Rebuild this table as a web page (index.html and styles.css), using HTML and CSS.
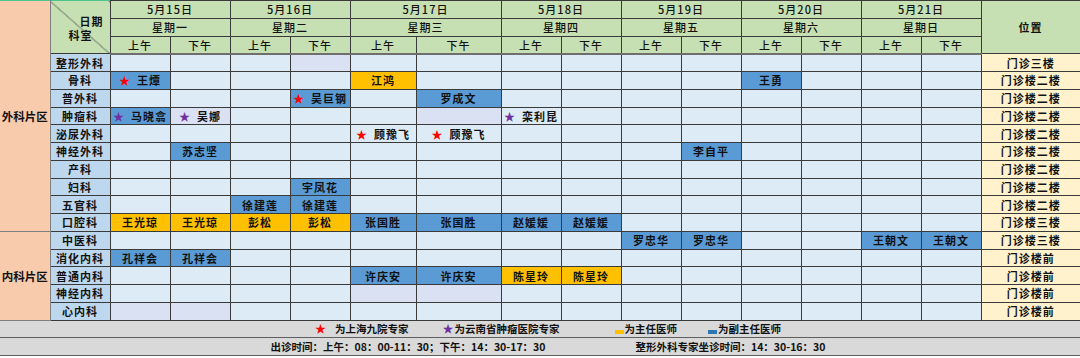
FILE: index.html
```html
<!DOCTYPE html>
<html>
    <head>
        <meta charset="utf-8">
        <title>门诊排班表</title>
        <link rel="stylesheet" href="styles.css">
    </head>
    <body>
        <table id="schedule">
            <colgroup>
                <col class="c-area"><col class="c-dept">
                <col class="c-slot"><col class="c-slot"><col class="c-slot"><col class="c-slot">
                <col class="c-wide1"><col class="c-wide2">
                <col class="c-slot"><col class="c-slot"><col class="c-slot"><col class="c-slot">
                <col class="c-slot"><col class="c-slot"><col class="c-slot"><col class="c-slot">
                <col class="c-pos">
            </colgroup>
            <tr>
                <td rowspan="13" class="area">外科片区</td>
                <td rowspan="3" class="corner"><span class="c-date">日期</span><span class="c-dept-lbl">科室</span></td>
                <td colspan="2" class="head">5月15日</td>
                <td colspan="2" class="head">5月16日</td>
                <td colspan="2" class="head">5月17日</td>
                <td colspan="2" class="head">5月18日</td>
                <td colspan="2" class="head gl">5月19日</td>
                <td colspan="2" class="head gl">5月20日</td>
                <td colspan="2" class="head gl">5月21日</td>
                <td rowspan="3" class="head pos-head">位置</td>
            </tr>
            <tr>
                <td colspan="2" class="head">星期一</td>
                <td colspan="2" class="head">星期二</td>
                <td colspan="2" class="head">星期三</td>
                <td colspan="2" class="head">星期四</td>
                <td colspan="2" class="head gl">星期五</td>
                <td colspan="2" class="head gl">星期六</td>
                <td colspan="2" class="head gl">星期日</td>
            </tr>
            <tr class="half">
                <td class="head">上午</td><td class="head">下午</td>
                <td class="head">上午</td><td class="head">下午</td>
                <td class="head">上午</td><td class="head">下午</td>
                <td class="head">上午</td><td class="head">下午</td>
                <td class="head gl">上午</td><td class="head gl">下午</td>
                <td class="head gl">上午</td><td class="head gl">下午</td>
                <td class="head gl">上午</td><td class="head">下午</td>
            </tr>
            <tr>
                <td class="dept">整形外科</td>
                <td></td><td></td><td></td><td class="l"></td><td></td><td></td><td></td><td></td>
                <td class="gl"></td><td class="gl"></td><td class="gl"></td><td class="gl"></td><td class="gl"></td><td></td>
                <td class="pos">门诊三楼</td>
            </tr>
            <tr>
                <td class="dept">骨科</td>
                <td class="b"><span class="star red">★</span>王燂</td><td></td><td></td><td></td>
                <td class="y">江鸿</td><td></td><td></td><td></td>
                <td class="gl"></td><td class="gl"></td><td class="gl b">王勇</td><td class="gl"></td><td class="gl"></td><td></td>
                <td class="pos">门诊楼二楼</td>
            </tr>
            <tr>
                <td class="dept">普外科</td>
                <td></td><td></td><td></td><td class="b"><span class="star red">★</span>吴巨钢</td>
                <td></td><td class="b">罗成文</td><td></td><td></td>
                <td class="gl"></td><td class="gl"></td><td class="gl"></td><td class="gl"></td><td class="gl"></td><td></td>
                <td class="pos">门诊楼二楼</td>
            </tr>
            <tr>
                <td class="dept">肿瘤科</td>
                <td class="b"><span class="star purple">★</span>马晓翕</td><td class="l"><span class="star purple">★</span>吴娜</td><td></td><td></td>
                <td></td><td class="l"></td><td><span class="star purple">★</span>栾利昆</td><td></td>
                <td class="gl"></td><td class="gl"></td><td class="gl"></td><td class="gl"></td><td class="gl"></td><td></td>
                <td class="pos">门诊楼二楼</td>
            </tr>
            <tr>
                <td class="dept">泌尿外科</td>
                <td></td><td></td><td></td><td></td>
                <td><span class="star red">★</span>顾豫飞</td><td><span class="star red">★</span>顾豫飞</td><td></td><td></td>
                <td class="gl"></td><td class="gl"></td><td class="gl"></td><td class="gl"></td><td class="gl"></td><td></td>
                <td class="pos">门诊楼二楼</td>
            </tr>
            <tr>
                <td class="dept">神经外科</td>
                <td></td><td class="b">苏志坚</td><td></td><td></td>
                <td></td><td></td><td></td><td></td>
                <td class="gl"></td><td class="gl b">李自平</td><td class="gl"></td><td class="gl"></td><td class="gl"></td><td></td>
                <td class="pos">门诊楼二楼</td>
            </tr>
            <tr>
                <td class="dept">产科</td>
                <td></td><td></td><td></td><td></td><td></td><td></td><td></td><td></td>
                <td class="gl"></td><td class="gl"></td><td class="gl"></td><td class="gl"></td><td class="gl"></td><td></td>
                <td class="pos">门诊楼二楼</td>
            </tr>
            <tr>
                <td class="dept">妇科</td>
                <td></td><td></td><td></td><td class="b">宇凤花</td>
                <td></td><td></td><td></td><td></td>
                <td class="gl"></td><td class="gl"></td><td class="gl"></td><td class="gl"></td><td class="gl"></td><td></td>
                <td class="pos">门诊楼二楼</td>
            </tr>
            <tr>
                <td class="dept">五官科</td>
                <td></td><td></td><td class="b">徐建莲</td><td class="b">徐建莲</td>
                <td></td><td></td><td></td><td></td>
                <td class="gl"></td><td class="gl"></td><td class="gl"></td><td class="gl"></td><td class="gl"></td><td></td>
                <td class="pos">门诊楼二楼</td>
            </tr>
            <tr>
                <td class="dept">口腔科</td>
                <td class="y">王光琼</td><td class="y">王光琼</td><td class="y">彭松</td><td class="y">彭松</td>
                <td class="b">张国胜</td><td class="b">张国胜</td><td class="b">赵媛媛</td><td class="b">赵媛媛</td>
                <td class="gl"></td><td class="gl"></td><td class="gl"></td><td class="gl"></td><td class="gl"></td><td></td>
                <td class="pos">门诊楼三楼</td>
            </tr>
            <tr>
                <td rowspan="5" class="area">内科片区</td>
                <td class="dept">中医科</td>
                <td></td><td></td><td></td><td></td><td></td><td></td><td></td><td></td>
                <td class="gl b">罗忠华</td><td class="gl b">罗忠华</td><td class="gl"></td><td class="gl"></td><td class="gl b">王朝文</td><td class="b">王朝文</td>
                <td class="pos">门诊楼三楼</td>
            </tr>
            <tr>
                <td class="dept">消化内科</td>
                <td class="b">孔祥会</td><td class="b">孔祥会</td><td></td><td></td><td></td><td></td><td></td><td></td>
                <td class="gl"></td><td class="gl"></td><td class="gl"></td><td class="gl"></td><td class="gl"></td><td></td>
                <td class="pos">门诊楼前</td>
            </tr>
            <tr>
                <td class="dept">普通内科</td>
                <td></td><td></td><td></td><td></td>
                <td class="b">许庆安</td><td class="b">许庆安</td><td class="y">陈星玲</td><td class="y">陈星玲</td>
                <td class="gl"></td><td class="gl"></td><td class="gl"></td><td class="gl"></td><td class="gl"></td><td></td>
                <td class="pos">门诊楼前</td>
            </tr>
            <tr>
                <td class="dept">神经内科</td>
                <td></td><td></td><td></td><td></td><td class="l"></td><td class="l"></td><td></td><td></td>
                <td class="gl"></td><td class="gl"></td><td class="gl"></td><td class="gl"></td><td class="gl"></td><td></td>
                <td class="pos">门诊楼前</td>
            </tr>
            <tr>
                <td class="dept">心内科</td>
                <td class="l"></td><td class="l"></td><td></td><td></td><td></td><td></td><td></td><td></td>
                <td class="gl"></td><td class="gl"></td><td class="gl"></td><td class="gl"></td><td class="gl"></td><td></td>
                <td class="pos">门诊楼前</td>
            </tr>
            <tr>
                <td colspan="17" class="foot">
                    <div class="legend">
                        <span class="leg-item leg-1"><span class="star red">★</span>为上海九院专家</span>
                        <span class="leg-item leg-2"><span class="star purple">★</span>为云南省肿瘤医院专家</span>
                        <span class="leg-item leg-3"><span class="bar bar-y"></span>为主任医师</span>
                        <span class="leg-item"><span class="bar bar-b"></span>为副主任医师</span>
                    </div>
                </td>
            </tr>
            <tr>
                <td colspan="17" class="foot">
                    <div class="legend">
                        <span class="leg-item leg-time">出诊时间：上午：08：00-11：30；下午：14：30-17：30</span>
                        <span class="leg-item">整形外科专家坐诊时间：14：30-16：30</span>
                    </div>
                </td>
            </tr>
        </table>
    </body>
</html>
```

FILE: styles.css
```css
body {
    margin: 0px;
    padding: 0px;
    background-color: white;
    font-family: "Noto Sans CJK SC", "Noto Sans", sans-serif;
}
#schedule {
    width: 1080px;
    table-layout: fixed;
    border-collapse: collapse;
    border-top: 1px solid #4cc58a;
    font-size: 11px;
    font-weight: bold;
    color: #111;
}
.c-area { width: 50px; }
.c-dept { width: 60px; }
.c-slot { width: 60px; }
.c-wide1 { width: 66px; }
.c-wide2 { width: 85px; }
.c-pos { width: 99px; }
tr {
    height: 17.75px;
}
td {
    padding: 0px;
    border: 1px solid #3a3a3a;
    background-color: #ddebf7;
    text-align: center;
    vertical-align: middle;
    line-height: 14px;
    white-space: nowrap;
    overflow: hidden;
    letter-spacing: 1px;
}
td.gl {
    border-left-color: #7f7f7f;
}
.head {
    background-color: #c6e0b4;
    font-weight: 500;
}
.pos-head {
    font-weight: bold;
}
.half td {
    border-bottom: 2px solid #6f6f6f;
}
.area {
    background-color: #f8cbad;
    font-size: 11.5px;
    letter-spacing: 0px;
    overflow: visible;
    border-left: none;
    border-top: none;
    border-color: #7f7f7f;
}
.corner {
    background-color: #c6e0b4;
    background-image: linear-gradient(to top right, transparent calc(50% - 0.6px), #444 50%, transparent calc(50% + 0.6px));
    text-align: left;
    font-size: 11px;
    border-top: none;
}
.c-date {
    display: block;
    text-align: right;
    padding-right: 6px;
    margin-top: 2px;
}
.c-dept-lbl {
    display: block;
    padding-left: 18px;
}
.dept {
    background-color: #bdd7ee;
}
.pos {
    background-color: #fff2cc;
    border-right: none;
}
.b {
    background-color: #5b9bd5;
}
.y {
    background-color: #ffc000;
}
.l {
    background-color: #d9e1f2;
}
.star {
    font-size: 11px;
    margin-right: 7px;
    letter-spacing: 0px;
}
.red {
    color: #ff0000;
}
.purple {
    color: #7030a0;
}
.foot {
    background-color: #d9d9d9;
    border-left: none;
    border-right: none;
    border-top: 1px solid #7f7f7f;
    border-bottom: 1px solid #5f5f5f;
    font-size: 10.5px;
    letter-spacing: 0px;
}
.legend {
    display: flex;
    justify-content: center;
    align-items: center;
    padding-left: 16px;
}
.leg-1 {
    margin-right: 34px;
}
.leg-1 .star {
    margin-right: 9px;
}
.leg-2 {
    margin-right: 55px;
}
.leg-2 .star {
    margin-right: 1px;
}
.leg-3 {
    margin-right: 31px;
}
.leg-time {
    margin-right: 90px;
}
.bar {
    display: inline-block;
    width: 9px;
    height: 4px;
    margin-right: 1px;
    vertical-align: -1px;
}
.bar-y {
    background-color: #ffc000;
}
.bar-b {
    background-color: #2e75b6;
}
```
